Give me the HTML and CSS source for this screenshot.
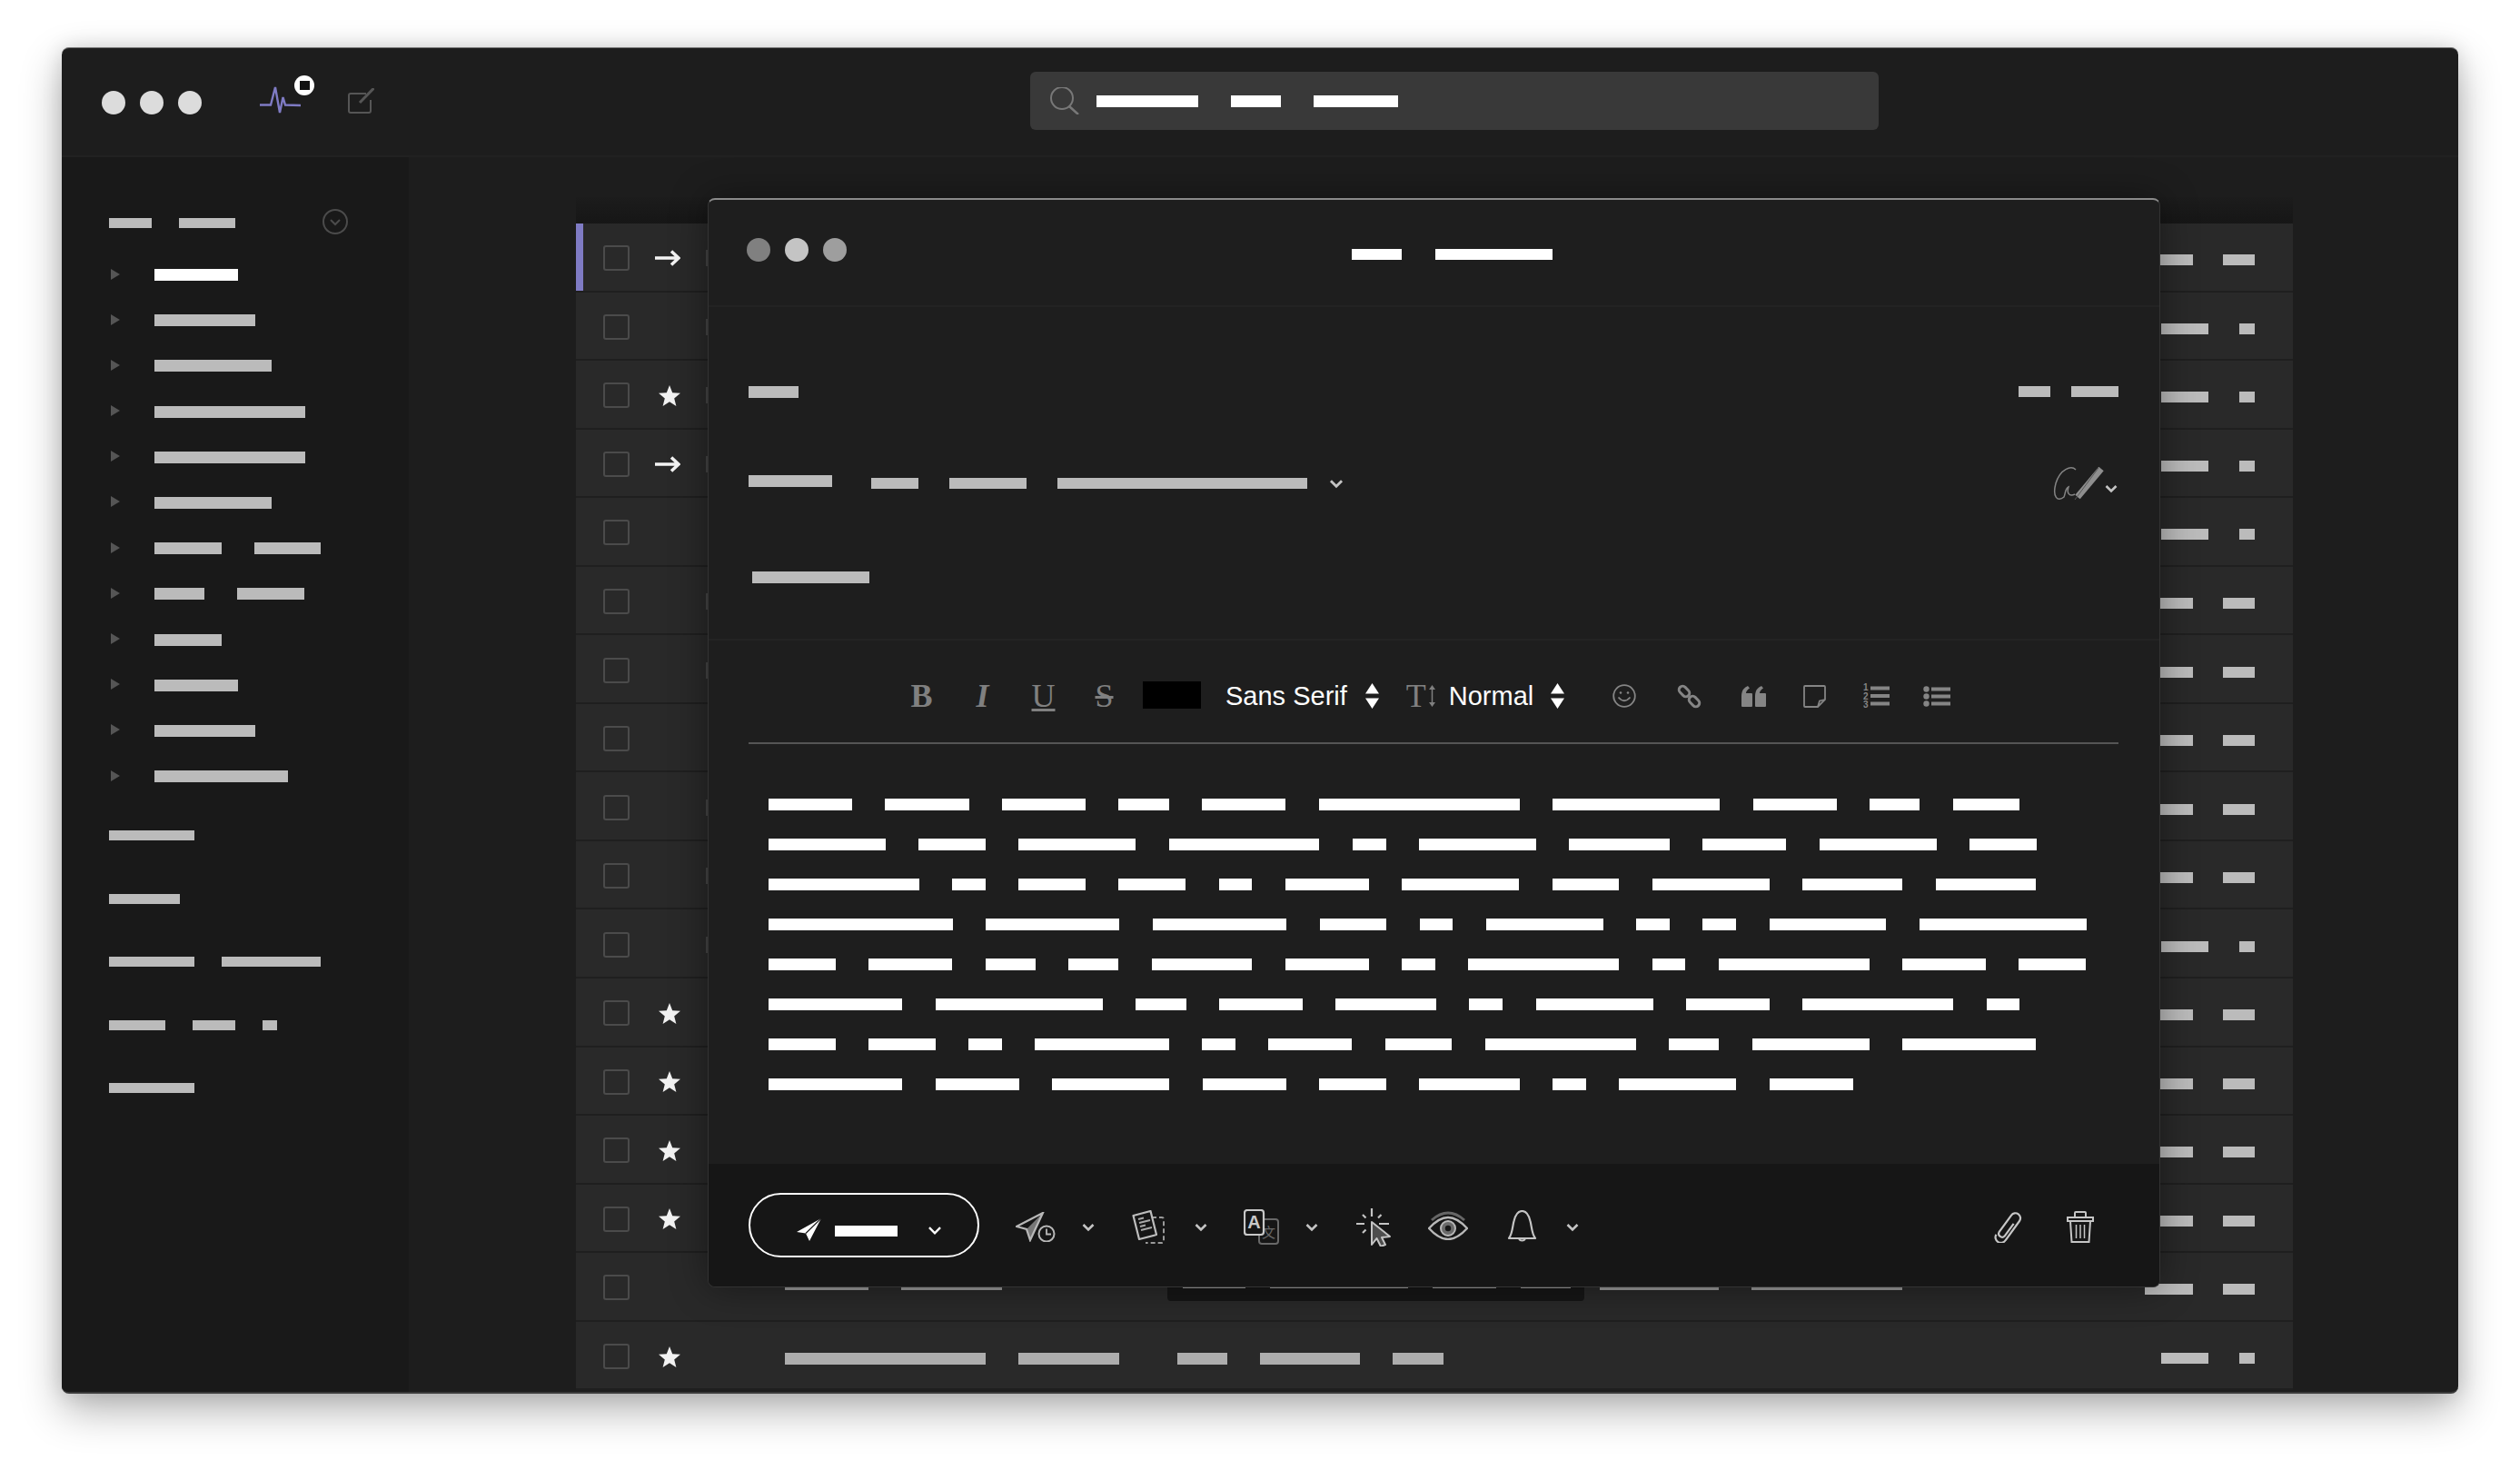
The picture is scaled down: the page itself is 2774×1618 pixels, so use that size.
FILE: index.html
```html
<!DOCTYPE html>
<html lang="en">
<head>
    <meta charset="UTF-8">
    <title>Mail compose</title>
    <link rel="stylesheet" href="styles.css">
</head>
<body>
<svg class="defs" width="0" height="0">
    <symbol id="arrow" viewBox="0 0 28 18"><path d="M0 9H25M18 1.5L26 9L18 16.5" fill="none" stroke="#f4f4f4" stroke-width="3.5"/></symbol>
    <symbol id="star" viewBox="0 0 24 23"><path d="M12 0L15.2 8.2L24 8.8L17.2 14.4L19.4 23L12 18.2L4.6 23L6.8 14.4L0 8.8L8.8 8.2Z" fill="#f2f2f2"/></symbol>
    <symbol id="updown" viewBox="0 0 15 28"><path d="M7.5 0L15 11.5H0ZM7.5 28L0 16.5H15Z" fill="#fff"/></symbol>
    <symbol id="vee" viewBox="0 0 14 10"><path d="M1.5 2L7 7.5L12.5 2" fill="none" stroke="#c4c4c4" stroke-width="2.6"/></symbol>
</svg>

<div class="window">
    <header class="titlebar">
        <span class="dot"></span><span class="dot"></span><span class="dot"></span>
        <div class="activity">
            <svg width="45" height="32" viewBox="0 0 45 32"><path d="M0 21.5H12L17 2L22 30L25.5 13L28 21.5L45 22" fill="none" stroke="#7f7bc4" stroke-width="2.4"/></svg>
            <span class="badge"><span class="badge-stop"></span></span>
        </div>
        <svg class="compose" width="29" height="28" viewBox="0 0 29 28"><path d="M20 6H3Q1 6 1 8V25Q1 27 3 27H23Q25 27 25 25V13" fill="none" stroke="#565656" stroke-width="2"/><path d="M28.5 0L13 16" stroke="#565656" stroke-width="3"/></svg>
        <div class="search">
            <svg width="32" height="30" viewBox="0 0 32 30"><circle cx="13" cy="12" r="12" fill="none" stroke="#787878" stroke-width="2"/><path d="M21 21L31 30" stroke="#787878" stroke-width="2.5"/></svg>
            <span class="bar white w6"></span><span class="bar white w3"></span><span class="bar white w5"></span>
        </div>
    </header>

    <div class="content">
        <aside class="sidebar">
            <div class="side-head small">
                <span class="bar w3"></span><span class="bar w4"></span>
                <svg class="side-toggle" width="28" height="28" viewBox="0 0 28 28"><circle cx="14" cy="14" r="13" fill="none" stroke="#4b4b4b" stroke-width="2"/><path d="M9 12L14 17L19 12" fill="none" stroke="#4b4b4b" stroke-width="2"/></svg>
            </div>
            <ul class="tree">
                <li><span class="caret"></span><span class="bar white w5"></span></li>
                <li><span class="caret"></span><span class="bar w6"></span></li>
                <li><span class="caret"></span><span class="bar w7"></span></li>
                <li><span class="caret"></span><span class="bar w9"></span></li>
                <li><span class="caret"></span><span class="bar w9"></span></li>
                <li><span class="caret"></span><span class="bar w7"></span></li>
                <li><span class="caret"></span><span class="bar w4"></span><span class="bar w4 next"></span></li>
                <li><span class="caret"></span><span class="bar w3"></span><span class="bar w4 next"></span></li>
                <li><span class="caret"></span><span class="bar w4"></span></li>
                <li><span class="caret"></span><span class="bar w5"></span></li>
                <li><span class="caret"></span><span class="bar w6"></span></li>
                <li><span class="caret"></span><span class="bar w8"></span></li>
            </ul>
            <ul class="side-links small">
                <li><span class="bar w6"></span></li>
                <li><span class="bar w5"></span></li>
                <li><span class="bar w6"></span><span class="bar w7"></span></li>
                <li><span class="bar w4"></span><span class="bar w3"></span><span class="bar w1"></span></li>
                <li><span class="bar w6"></span></li>
            </ul>
        </aside>

        <main class="list">
            <div class="list-head"></div>
            <div class="row active"><span class="check"></span><svg class="mark"><use href="#arrow"/></svg><span class="sliver"></span><div class="meta"><span class="bar w3"></span><span class="bar w2"></span></div></div>
            <div class="row"><span class="check"></span><span class="mark"></span><span class="sliver"></span><div class="meta"><span class="bar w3"></span><span class="bar w1"></span></div></div>
            <div class="row"><span class="check"></span><svg class="mark star"><use href="#star"/></svg><span class="sliver"></span><div class="meta"><span class="bar w3"></span><span class="bar w1"></span></div></div>
            <div class="row"><span class="check"></span><svg class="mark"><use href="#arrow"/></svg><span class="sliver"></span><div class="meta"><span class="bar w3"></span><span class="bar w1"></span></div></div>
            <div class="row"><span class="check"></span><span class="mark"></span><div class="meta"><span class="bar w3"></span><span class="bar w1"></span></div></div>
            <div class="row"><span class="check"></span><span class="mark"></span><span class="sliver"></span><div class="meta"><span class="bar w3"></span><span class="bar w2"></span></div></div>
            <div class="row"><span class="check"></span><span class="mark"></span><span class="sliver"></span><div class="meta"><span class="bar w3"></span><span class="bar w2"></span></div></div>
            <div class="row"><span class="check"></span><span class="mark"></span><div class="meta"><span class="bar w3"></span><span class="bar w2"></span></div></div>
            <div class="row"><span class="check"></span><span class="mark"></span><span class="sliver"></span><div class="meta"><span class="bar w3"></span><span class="bar w2"></span></div></div>
            <div class="row"><span class="check"></span><span class="mark"></span><span class="sliver"></span><div class="meta"><span class="bar w3"></span><span class="bar w2"></span></div></div>
            <div class="row"><span class="check"></span><span class="mark"></span><span class="sliver"></span><div class="meta"><span class="bar w3"></span><span class="bar w1"></span></div></div>
            <div class="row"><span class="check"></span><svg class="mark star"><use href="#star"/></svg><div class="meta"><span class="bar w3"></span><span class="bar w2"></span></div></div>
            <div class="row"><span class="check"></span><svg class="mark star"><use href="#star"/></svg><div class="meta"><span class="bar w3"></span><span class="bar w2"></span></div></div>
            <div class="row"><span class="check"></span><svg class="mark star"><use href="#star"/></svg><div class="meta"><span class="bar w3"></span><span class="bar w2"></span></div></div>
            <div class="row"><span class="check"></span><svg class="mark star"><use href="#star"/></svg><div class="meta"><span class="bar w3"></span><span class="bar w2"></span></div></div>
            <div class="row">
                <span class="check"></span><span class="mark"></span>
                <div class="subject dim">
                    <span class="bar w5"></span><span class="bar w6"></span>
                    <div class="snippet">
                        <span class="bar" style="width:69px"></span><span class="bar" style="width:152px"></span><span class="bar" style="width:70px"></span><span class="bar" style="width:55px"></span>
                    </div>
                    <span class="bar after" style="width:131px"></span><span class="bar" style="width:166px"></span>
                </div>
                <div class="meta"><span class="bar w3"></span><span class="bar w2"></span></div>
            </div>
            <div class="row">
                <span class="check"></span><svg class="mark star"><use href="#star"/></svg>
                <div class="subject">
                    <span class="bar w12"></span><span class="bar w6"></span>
                    <span class="bar w3 after"></span><span class="bar w6"></span><span class="bar w3"></span>
                </div>
                <div class="meta"><span class="bar w3"></span><span class="bar w1"></span></div>
            </div>
        </main>
    </div>

    <section class="modal">
        <div class="modal-title">
            <span class="dot dot-a"></span><span class="dot dot-b"></span><span class="dot dot-c"></span>
            <div class="title-text"><span class="bar white w3"></span><span class="bar white w7"></span></div>
        </div>

        <div class="fields">
            <div class="from-row">
                <span class="bar w3"></span>
                <div class="from-right"><span class="bar w2"></span><span class="bar w3"></span></div>
            </div>
            <div class="to-row">
                <span class="bar w5"></span>
                <div class="to-list">
                    <span class="bar w3"></span><span class="bar w5"></span><span class="bar w16"></span>
                </div>
                <svg class="to-vee" width="16" height="11"><use href="#vee"/></svg>
                <svg class="sign" width="56" height="37" viewBox="0 0 56 37"><path d="M25 3C20-2 8 2 3 18C-1 33 5 39 12 33C14 28 13 24 17 22C15 28 17 33 24 30" fill="none" stroke="#858585" stroke-width="1.5"/><path d="M53 2L27 33" stroke="#8f8f8f" stroke-width="7"/><path d="M50 1L24 36" stroke="#585858" stroke-width="1"/></svg>
                <svg class="sign-vee" width="16" height="10"><use href="#vee"/></svg>
            </div>
            <div class="subject-row"><span class="bar w7"></span></div>
        </div>

        <div class="toolbar">
            <span class="tool bold">B</span>
            <span class="tool ital">I</span>
            <span class="tool under">U</span>
            <span class="tool strike">S</span>
            <span class="swatch"></span>
            <span class="sel font-sel">Sans Serif</span>
            <svg class="updown" width="15" height="28"><use href="#updown"/></svg>
            <span class="size-t">T</span>
            <svg class="size-arrow" width="7" height="24" viewBox="0 0 7 24"><path d="M3.5 2V22" stroke="#808080" stroke-width="1.5"/><path d="M3.5 0L7 5H0ZM3.5 24L0 19H7Z" fill="#808080"/></svg>
            <span class="sel size-sel">Normal</span>
            <svg class="updown updown-size" width="15" height="28"><use href="#updown"/></svg>
            <svg class="ti ti-smile" width="26" height="26" viewBox="0 0 26 26" fill="none" stroke="#858585" stroke-width="1.8"><circle cx="13" cy="13" r="11.8"/><path d="M6.5 14.5Q13 22 19.5 14.5"/><circle cx="9" cy="9.5" r="1.3" fill="#858585" stroke="none"/><circle cx="17" cy="9.5" r="1.3" fill="#858585" stroke="none"/></svg>
            <svg class="ti ti-link" width="27" height="27" viewBox="0 0 27 27" fill="none" stroke="#858585" stroke-width="3"><rect x="-6.5" y="-4" width="13" height="8" rx="4" transform="translate(8 8) rotate(45)"/><rect x="-6.5" y="-4" width="13" height="8" rx="4" transform="translate(19 19) rotate(45)"/></svg>
            <svg class="ti ti-quote" width="27" height="23" viewBox="0 0 27 23" fill="#858585"><path d="M0 11Q0 3 7 0L9 2.5Q5 5 5 8H11Q12 8 12 9V22Q12 23 11 23H1Q0 23 0 22Z"/><path d="M15 11Q15 3 22 0L24 2.5Q20 5 20 8H26Q27 8 27 9V22Q27 23 26 23H16Q15 23 15 22Z"/></svg>
            <svg class="ti ti-note" width="25" height="25" viewBox="0 0 25 25" fill="none" stroke="#858585" stroke-width="1.8"><path d="M2 1H23Q24 1 24 2V16L16 24H2Q1 24 1 23V2Q1 1 2 1Z"/><path d="M24 16L18 17.5L16 24"/></svg>
            <svg class="ti ti-ol" width="29" height="28" viewBox="0 0 29 28"><text class="ol-num" x="0" y="8">1</text><text class="ol-num" x="0" y="18">2</text><text class="ol-num" x="0" y="27">3</text><path d="M8 3.5H29V7.5H8ZM8 12H29V16H8ZM8 20.5H29V24.5H8Z" fill="#858585"/></svg>
            <svg class="ti ti-ul" width="30" height="23" viewBox="0 0 30 23" fill="#858585"><circle cx="3.5" cy="3.5" r="3.2"/><circle cx="3.5" cy="11.5" r="3.2"/><circle cx="3.5" cy="19.5" r="3.2"/><path d="M9 1.5H30V5.5H9ZM9 9.5H30V13.5H9ZM9 17.5H30V21.5H9Z"/></svg>
        </div>

        <div class="body">
            <div class="line"><span class="bar white w5"></span><span class="bar white w5"></span><span class="bar white w5"></span><span class="bar white w3"></span><span class="bar white w5"></span><span class="bar white w12"></span><span class="bar white w10"></span><span class="bar white w5"></span><span class="bar white w3"></span><span class="bar white w4"></span></div>
            <div class="line"><span class="bar white w7"></span><span class="bar white w4"></span><span class="bar white w7"></span><span class="bar white w9"></span><span class="bar white w2"></span><span class="bar white w7"></span><span class="bar white w6"></span><span class="bar white w5"></span><span class="bar white w7"></span><span class="bar white w4"></span></div>
            <div class="line"><span class="bar white w9"></span><span class="bar white w2"></span><span class="bar white w4"></span><span class="bar white w4"></span><span class="bar white w2"></span><span class="bar white w5"></span><span class="bar white w7"></span><span class="bar white w4"></span><span class="bar white w7"></span><span class="bar white w6"></span><span class="bar white w6"></span></div>
            <div class="line"><span class="bar white w11"></span><span class="bar white w8"></span><span class="bar white w8"></span><span class="bar white w4"></span><span class="bar white w2"></span><span class="bar white w7"></span><span class="bar white w2"></span><span class="bar white w2"></span><span class="bar white w7"></span><span class="bar white w10"></span></div>
            <div class="line"><span class="bar white w4"></span><span class="bar white w5"></span><span class="bar white w3"></span><span class="bar white w3"></span><span class="bar white w6"></span><span class="bar white w5"></span><span class="bar white w2"></span><span class="bar white w9"></span><span class="bar white w2"></span><span class="bar white w9"></span><span class="bar white w5"></span><span class="bar white w4"></span></div>
            <div class="line"><span class="bar white w8"></span><span class="bar white w10"></span><span class="bar white w3"></span><span class="bar white w5"></span><span class="bar white w6"></span><span class="bar white w2"></span><span class="bar white w7"></span><span class="bar white w5"></span><span class="bar white w9"></span><span class="bar white w2"></span></div>
            <div class="line"><span class="bar white w4"></span><span class="bar white w4"></span><span class="bar white w2"></span><span class="bar white w8"></span><span class="bar white w2"></span><span class="bar white w5"></span><span class="bar white w4"></span><span class="bar white w9"></span><span class="bar white w3"></span><span class="bar white w7"></span><span class="bar white w8"></span></div>
            <div class="line"><span class="bar white w8"></span><span class="bar white w5"></span><span class="bar white w7"></span><span class="bar white w5"></span><span class="bar white w4"></span><span class="bar white w6"></span><span class="bar white w2"></span><span class="bar white w7"></span><span class="bar white w5"></span></div>
        </div>

        <footer class="modal-foot">
            <button class="send">
                <svg width="27" height="25" viewBox="0 0 27 25"><path d="M27 0L0 15L10 16.5L14 25Z" fill="#fff"/><path d="M27 0L10 16.5" stroke="#161616" stroke-width="1.2"/></svg>
                <span class="bar white send-label"></span>
                <svg class="send-vee" width="18" height="11" viewBox="0 0 14 10"><path d="M1.5 2L7 7.5L12.5 2" fill="none" stroke="#fff" stroke-width="2.2"/></svg>
            </button>
            <svg class="fi fi-later" width="44" height="33" viewBox="0 0 44 33"><path d="M30 1L12 19L16 31Z" fill="#777"/><path d="M30 1L1 16L12 19L16 31Z" fill="none" stroke="#b8b8b8" stroke-width="2.2"/><circle cx="34" cy="24" r="8.5" fill="#161616" stroke="#b8b8b8" stroke-width="2"/><path d="M34 18.5V24.5H39" fill="none" stroke="#b8b8b8" stroke-width="1.8"/></svg>
            <svg class="fv fv-later" width="14" height="10"><use href="#vee"/></svg>
            <svg class="fi fi-tpl" width="36" height="37" viewBox="0 0 36 37"><path d="M22 8H33Q35 8 35 10V34Q35 36 33 36H15" fill="none" stroke="#9a9a9a" stroke-width="2" stroke-dasharray="5 3"/><path d="M1.5 6L20.5 1L27 27L8 32Z" fill="#161616" stroke="#bdbdbd" stroke-width="2.2" stroke-linejoin="round"/><path d="M7 10L13 8.5M8 14L20 11M9 18L15 16.5M10 22L22 19" stroke="#a8a8a8" stroke-width="2"/></svg>
            <svg class="fv fv-tpl" width="14" height="10"><use href="#vee"/></svg>
            <svg class="fi fi-lang" width="39" height="39" viewBox="0 0 39 39"><rect x="17" y="11" width="21" height="27" rx="3" fill="none" stroke="#686868" stroke-width="2"/><text class="lang-zh" x="20" y="31">文</text><rect x="1" y="1" width="21" height="27" rx="3" fill="#161616" stroke="#c8c8c8" stroke-width="2.2"/><text class="lang-a" x="11.5" y="21">A</text></svg>
            <svg class="fv fv-lang" width="14" height="10"><use href="#vee"/></svg>
            <svg class="fi fi-click" width="38" height="42" viewBox="0 0 38 42"><path d="M17 0V9M0 17H9M25 17H36M7 7L10.5 10.5M27.5 7L24 10.5M7 27L10.5 23.5" fill="none" stroke="#c4c4c4" stroke-width="2.2"/><path d="M17 15L37 31L28 32L32 40L27 42L22.5 33L17 40Z" fill="#4d4d4d" stroke="#c4c4c4" stroke-width="2" stroke-linejoin="round"/></svg>
            <svg class="fi fi-eye" width="44" height="32" viewBox="0 0 44 32"><path d="M4 10Q22-6 40 10" fill="none" stroke="#666" stroke-width="3"/><path d="M1 19Q12 7 22 7Q32 7 43 19Q32 31 22 31Q12 31 1 19Z" fill="none" stroke="#b8b8b8" stroke-width="2.4"/><circle cx="22" cy="19" r="8" fill="#6a6a6a" stroke="#b8b8b8" stroke-width="2"/><circle cx="22" cy="19" r="3.2" fill="#161616"/></svg>
            <svg class="fi fi-bell" width="33" height="38" viewBox="0 0 33 38"><path d="M2 31C6 26 6 17 7.5 12C9 6 12 1 16.5 1C21 1 24 6 25.5 12C27 17 27 26 31 31Z" fill="none" stroke="#c4c4c4" stroke-width="2.2" stroke-linejoin="round"/><path d="M13 31.5A4 4 0 0 0 20 31.5" fill="none" stroke="#c4c4c4" stroke-width="2"/></svg>
            <svg class="fv fv-bell" width="14" height="10"><use href="#vee"/></svg>
            <svg class="fi fi-clip" width="35" height="34" viewBox="0 0 35 34"><path transform="translate(17.5 17) rotate(36)" d="M2.5-7V10A3.8 3.8 0 0 1-5 10V-13A5.5 5.5 0 0 1 6-13V13A6 6 0 0 1-6 14" fill="none" stroke="#c6c6c6" stroke-width="2.2"/></svg>
            <svg class="fi fi-trash" width="30" height="35" viewBox="0 0 30 35" fill="none" stroke="#c6c6c6" stroke-width="2"><path d="M1 7V11H29V7Z"/><path d="M9 6V2Q9 1 10 1H20Q21 1 21 2V6"/><path d="M4 11L5.5 34H24.5L26 11"/><path d="M10.5 15V30M15 15V30M19.5 15V30" stroke-width="1.5"/></svg>
        </footer>
    </section>
</div>
</body>
</html>
```

FILE: styles.css
```css
* {
    box-sizing: border-box;
}
html, body {
    margin: 0;
    height: 100%;
}
body {
    background-color: #fff;
    padding: 52px 68px 84px;
    font-family: "Liberation Sans", Arial, sans-serif;
    overflow: hidden;
}
ul {
    list-style: none;
    margin: 0;
    padding: 0;
}
.defs {
    position: absolute;
}

/* redacted text: one unit is one character */
.bar {
    display: block;
    flex: none;
    height: 13px;
    background-color: #bbb;
}
.bar.white {
    background-color: #fff;
}
.w1 { width: calc(1 * var(--u)); }
.w2 { width: calc(2 * var(--u)); }
.w3 { width: calc(3 * var(--u)); }
.w4 { width: calc(4 * var(--u)); }
.w5 { width: calc(5 * var(--u)); }
.w6 { width: calc(6 * var(--u)); }
.w7 { width: calc(7 * var(--u)); }
.w8 { width: calc(8 * var(--u)); }
.w9 { width: calc(9 * var(--u)); }
.w10 { width: calc(10 * var(--u)); }
.w11 { width: calc(11 * var(--u)); }
.w12 { width: calc(12 * var(--u)); }
.w16 { width: calc(16 * var(--u)); }

.window {
    --u: 18.42px;
    position: relative;
    height: 1482px;
    display: flex;
    flex-direction: column;
    overflow: hidden;
    background-color: #1d1d1d;
    border-radius: 8px;
    border-top: 1px solid #777;
    border-bottom: 2px solid #3a3a3a;
    box-shadow: 0 18px 46px rgba(0, 0, 0, 0.3), 0 0 22px rgba(0, 0, 0, 0.12);
}

/* top bar */
.titlebar {
    flex: none;
    height: 120px;
    display: flex;
    align-items: center;
    padding: 0 0 0 44px;
    border-bottom: 2px solid #212121;
}
.dot {
    width: 26px;
    height: 26px;
    margin-right: 16px;
    border-radius: 50%;
    background-color: #dcdcdc;
}
.titlebar .dot {
    margin-top: 2px;
}
.activity {
    position: relative;
    width: 45px;
    height: 32px;
    margin: -4px 0 0 48px;
}
.activity svg {
    display: block;
}
.badge {
    position: absolute;
    left: 38px;
    top: -11px;
    width: 22px;
    height: 22px;
    border-radius: 50%;
    background-color: #fff;
    display: flex;
    align-items: center;
    justify-content: center;
}
.badge-stop {
    width: 11px;
    height: 10px;
    background-color: #111;
}
.compose {
    margin: -2px 0 0 52px;
}
.search {
    --u: 18.6px;
    width: 934px;
    height: 64px;
    margin: -2px 0 0 722px;
    padding: 0 0 0 22px;
    display: flex;
    align-items: center;
    gap: 36px;
    border-radius: 6px;
    background-color: #393939;
}
.search svg {
    margin-right: -17px;
}

.content {
    flex: 1;
    display: flex;
    min-height: 0;
}

/* left column */
.sidebar {
    flex: none;
    width: 382px;
    padding: 57px 0 0 52px;
    background-color: #191919;
}
.small {
    --u: 15.6px;
}
.side-head {
    height: 28px;
    display: flex;
    align-items: center;
    gap: 30px;
}
.side-head .bar {
    height: 11px;
    margin-top: 3px;
}
.side-toggle {
    margin-left: 66px;
}
.tree {
    margin-top: 38px;
}
.tree li {
    height: 13px;
    margin-bottom: 37.2px;
    display: flex;
    align-items: center;
    padding-left: 2px;
}
.caret {
    width: 0;
    height: 0;
    margin: -2px 38px 0 0;
    border-left: 10px solid #555;
    border-top: 6.5px solid transparent;
    border-bottom: 6.5px solid transparent;
}
.next {
    margin-left: 36px;
}
.side-links {
    margin-top: 53px;
}
.side-links li {
    height: 11px;
    margin-bottom: 58.5px;
    display: flex;
    gap: 30px;
}
.side-links .bar {
    height: 11px;
}

/* message list behind the composer */
.list {
    flex: none;
    width: 1890px;
    margin-left: 184px;
    padding-top: 44px;
}
.list-head {
    height: 29px;
    background: linear-gradient(#1c1c1c, #161616);
}
.row {
    --u: 17.5px;
    height: 75.56px;
    display: flex;
    align-items: center;
    padding-top: 3px;
    padding-left: 30px;
    background-color: #292929;
    border-bottom: 2px solid #1f1f1f;
}
.row.active {
    box-shadow: inset 8px 0 0 #7f7bc4;
}
.check {
    flex: none;
    width: 29px;
    height: 28px;
    border: 2px solid #4b4b4b;
    border-radius: 3px;
}
.mark {
    flex: none;
    width: 28px;
    height: 18px;
    margin-left: 28px;
}
.mark.star {
    height: 23px;
    margin-left: 30px;
    margin-right: -2px;
}
.sliver {
    flex: none;
    width: 3px;
    height: 18px;
    margin-left: 28px;
    background-color: #444;
}
.meta {
    display: flex;
    gap: 33.5px;
    margin: 4px 42px 0 auto;
}
.meta .bar {
    height: 12px;
}
.subject {
    --u: 18.42px;
    display: flex;
    gap: 36px;
    margin: 4px 0 0 115px;
}
.subject .bar {
    background-color: #adadad;
}
.subject .after {
    margin-left: 28px;
}
.subject.dim .bar {
    background-color: #999;
}
.subject.dim .after {
    margin-left: -19px;
}
.snippet {
    display: flex;
    gap: 27px;
    height: 57px;
    margin: -32px 0 0 146px;
    padding: 30px 15px 0 17px;
    border-radius: 4px;
    background-color: #161616;
}

/* composer */
.modal {
    position: absolute;
    left: 711px;
    top: 165px;
    width: 1599px;
    height: 1199px;
    display: flex;
    flex-direction: column;
    background-color: #1e1e1e;
    border: 1px solid #333;
    border-top: 2px solid #8a8a8a;
    border-radius: 8px;
    box-shadow: 0 0 40px rgba(0, 0, 0, 0.4);
    overflow: hidden;
}
.modal-title {
    flex: none;
    height: 118px;
    display: flex;
    align-items: flex-start;
    padding: 42px 0 0 42px;
    border-bottom: 2px solid #232323;
}
.dot-a {
    background-color: #808080;
}
.dot-b {
    background-color: #c4c4c4;
}
.dot-c {
    background-color: #9e9e9e;
}
.title-text {
    display: flex;
    gap: 36.5px;
    margin: 12px 0 0 540px;
}
.title-text .bar {
    height: 12px;
}
.fields {
    flex: none;
    height: 367px;
    padding: 87px 45px 0 44px;
    border-bottom: 2px solid #232323;
}
.from-row {
    display: flex;
    justify-content: space-between;
}
.from-right {
    --u: 17.4px;
    display: flex;
    gap: 23px;
}
.from-right .bar {
    height: 12px;
}
.to-row {
    height: 37px;
    margin-top: 76px;
    display: flex;
    align-items: flex-start;
}
.to-row > .bar {
    margin-top: 9px;
}
.to-list {
    --u: 17.15px;
    display: flex;
    gap: 34px;
    margin: 12px 0 0 43px;
}
.to-list .bar {
    height: 12px;
}
.to-vee {
    margin: 13px 0 0 24px;
}
.sign {
    margin-left: auto;
}
.sign-vee {
    margin-top: 19px;
}
.subject-row {
    margin: 78px 0 0 4px;
}

.toolbar {
    flex: none;
    height: 114px;
    margin: 0 45px 0 44px;
    padding: 10px 0 0 157px;
    display: flex;
    align-items: center;
    border-bottom: 2px solid #555;
}
.tool {
    width: 67px;
    text-align: center;
    font-family: "Liberation Serif", serif;
    font-size: 36px;
    line-height: 1;
    color: #808080;
}
.bold {
    font-weight: bold;
}
.ital {
    font-style: italic;
    font-weight: bold;
}
.under {
    text-decoration: underline;
}
.strike {
    text-decoration: line-through;
}
.swatch {
    width: 64px;
    height: 30px;
    margin: -2px 0 0 9px;
    background-color: #000;
}
.sel {
    font-size: 29px;
    line-height: 1;
    color: #fff;
}
.font-sel {
    margin-left: 27px;
}
.size-sel {
    margin-left: 15px;
}
.updown {
    margin-left: 20px;
}
.updown-size {
    margin-left: 19px;
}
.size-t {
    margin-left: 30px;
    font-family: "Liberation Serif", serif;
    font-size: 36px;
    line-height: 1;
    color: #808080;
}
.size-arrow {
    margin-left: 3px;
}
.ti-smile {
    margin-left: 53px;
}
.ti-link {
    margin-left: 45px;
}
.ti-quote {
    margin-left: 44px;
}
.ti-note {
    margin-left: 41px;
}
.ti-ol {
    margin-left: 41px;
}
.ti-ul {
    margin-left: 37px;
}
.ol-num {
    font-family: "Liberation Sans", sans-serif;
    font-size: 10px;
    font-weight: bold;
    fill: #858585;
}

.body {
    flex: 1;
    padding: 60px 0 0 66px;
}
.line {
    display: flex;
    gap: 36.4px;
    margin-bottom: 31px;
}

.modal-foot {
    flex: none;
    height: 135px;
    display: flex;
    align-items: center;
    padding: 0 72px 0 44px;
    background-color: #161616;
}
.send {
    width: 254px;
    height: 71px;
    padding: 10px 0 0 51px;
    display: flex;
    align-items: center;
    background: none;
    border: 2px solid #fff;
    border-radius: 36px;
}
.send-label {
    width: 69px;
    height: 12px;
    margin: 2px 0 0 15px;
}
.send-vee {
    margin: 2px 0 0 32px;
}
.fi {
    flex: none;
    margin-top: 4px;
}
.fv {
    flex: none;
    margin-top: 5px;
}
.fi-later { margin-left: 40px; }
.fv-later { margin-left: 29px; }
.fi-tpl { margin-left: 41px; }
.fv-tpl { margin-left: 33px; }
.fi-lang { margin-left: 40px; }
.fv-lang { margin-left: 29px; }
.fi-click { margin-left: 42px; }
.fi-eye { margin: 0 0 0 41px; }
.fi-bell { margin-left: 43px; }
.fv-bell { margin-left: 32px; }
.fi-clip { margin-left: auto; }
.fi-trash { margin-left: 47px; }
.lang-a {
    font-family: "Liberation Sans", sans-serif;
    font-size: 20px;
    font-weight: bold;
    text-anchor: middle;
    fill: #c8c8c8;
}
.lang-zh {
    font-family: "Noto Sans CJK SC", sans-serif;
    font-size: 15px;
    fill: #686868;
}
```
